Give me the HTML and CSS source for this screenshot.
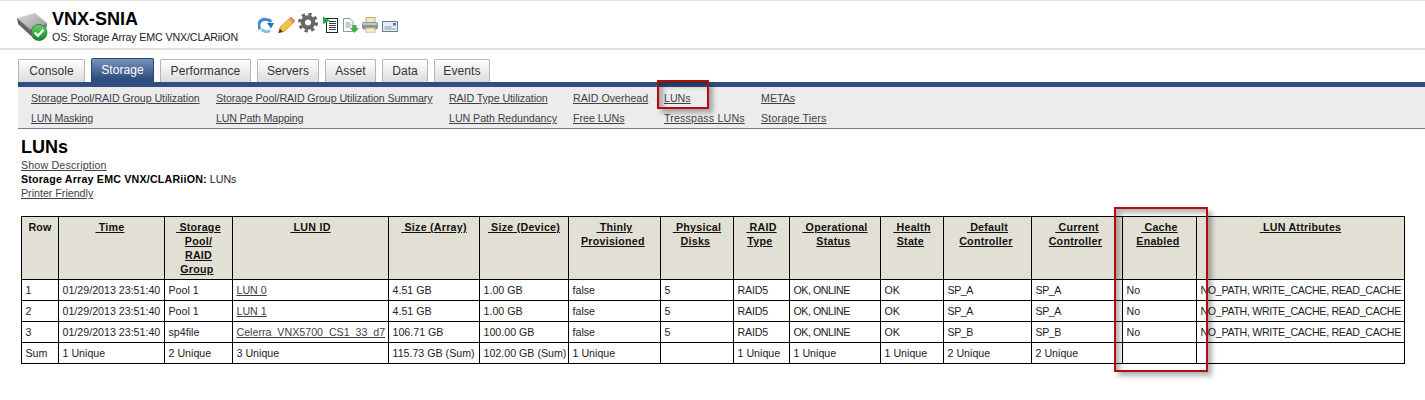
FILE: index.html
```html
<!DOCTYPE html>
<html lang="en">
<head>
<meta charset="utf-8">
<title>VNX-SNIA LUNs</title>
<link rel="stylesheet" href="styles.css">
</head>
<body>
<header class="top">
  <svg class="device" width="32" height="30" viewBox="0 0 32 30">
    <defs>
      <linearGradient id="dk" x1="0" y1="0" x2="1" y2="1"><stop offset="0" stop-color="#dadada"/><stop offset="1" stop-color="#9a9a9a"/></linearGradient>
      <linearGradient id="gr" x1="0" y1="0" x2="0" y2="1"><stop offset="0" stop-color="#6fd365"/><stop offset="1" stop-color="#0f8a22"/></linearGradient>
    </defs>
    <path d="M0 6 L18 1 L30 11 L14 18 Z" fill="url(#dk)"/>
    <path d="M0 6 L14 18 L14 24 L1 12 Z" fill="#666"/>
    <path d="M14 18 L30 11 L30 15 L14 24 Z" fill="#858585"/>
    <circle cx="22" cy="20.500" r="8" fill="url(#gr)" stroke="#0c6a1b" stroke-width=".7"/>
    <path d="M17.800 20.500 L21 23.800 L26.400 17.700" fill="none" stroke="#fff" stroke-width="2.400"/>
  </svg>
  <div class="ident">
    <h1 class="name">VNX-SNIA</h1>
    <p class="os">OS: Storage Array EMC VNX/CLARiiON</p>
  </div>
  <div class="tools">
    <svg width="20" height="20" viewBox="0 0 20 20"><path d="M2 16 A6 6 0 0 1 8 6.500 A6 6 0 0 1 13 9" fill="none" stroke="#3d8ed6" stroke-width="3.200"/><path d="M3.500 16 A6 6 0 0 0 12 17.500" fill="none" stroke="#86bfec" stroke-width="3"/><path d="M9 10 L16 10 L13 15.500 Z" fill="#2a70b8"/></svg>
    <svg width="20" height="20" viewBox="0 0 20 20"><path d="M0.500 20 L2 14.500 L13 4 L17 8 L6 18.500 Z" fill="#f6c445" stroke="#c98c1d" stroke-width=".8"/><path d="M13 4 L17 8 L15 10 L11 6 Z" fill="#e8867a"/><path d="M0.500 20 L2 15.800 L4.800 18.500 Z" fill="#3f3728"/></svg>
    <svg width="25" height="20" viewBox="0 0 25 20"><circle cx="10" cy="9.500" r="8.500" fill="none" stroke="#666" stroke-width="3" stroke-dasharray="3.340 3.340"/><circle cx="10" cy="9.500" r="7.300" fill="#666"/><circle cx="10" cy="9.500" r="3" fill="#fff"/></svg>
    <svg width="20" height="20" viewBox="0 0 20 20"><rect x="3.500" y="5.500" width="11" height="14" fill="#fff" stroke="#222"/><path d="M6 8.500h7M6 10.500h7M6 12.500h7M6 14.500h7M6 16.500h7" stroke="#2f3f4f"/><path d="M0 3.500 L7 7.500 L0 11 Z" fill="#29a544"/></svg>
    <svg width="19" height="20" viewBox="0 0 19 20"><path d="M.500 5.500h6.500l3 3v10h-9.500Z" fill="#fff" stroke="#8c96a8"/><path d="M2.500 10h5M2.500 12h6M2.500 14h5" stroke="#8c96a8"/><path d="M9.500 12h4v3h2.500L11.500 20 7 15h2.500Z" fill="#3bb54a"/></svg>
    <svg width="20" height="20" viewBox="0 0 20 20"><rect x="4" y="4.500" width="9" height="5" fill="#f1e6b4" stroke="#b8ad7c"/><rect x="0" y="9" width="16" height="7.500" rx="2" fill="#8a939b"/><rect x="1" y="10" width="14" height="2" fill="#c2c9ce"/><rect x="4" y="15" width="9" height="5" fill="#f5ecc4" stroke="#c9bd88"/></svg>
    <svg width="16" height="20" viewBox="0 0 16 20"><rect x=".500" y="8.500" width="15" height="10" fill="#e6ecf3" stroke="#6d7c8c"/><rect x="11" y="10" width="3" height="2.500" fill="#4a7ab8"/><path d="M2.500 14h7M2.500 16h11" stroke="#8b98a6"/></svg>
  </div>
</header>

<nav class="tabs">
  <a class="tab">Console</a>
  <a class="tab active">Storage</a>
  <a class="tab">Performance</a>
  <a class="tab">Servers</a>
  <a class="tab">Asset</a>
  <a class="tab">Data</a>
  <a class="tab">Events</a>
</nav>

<nav class="subnav">
  <a class="t1" href="#">Storage Pool/RAID Group Utilization</a>
  <a class="t1" href="#">Storage Pool/RAID Group Utilization Summary</a>
  <a class="t1" href="#">RAID Type Utilization</a>
  <a href="#">RAID Overhead</a>
  <a href="#">LUNs</a>
  <a href="#">METAs</a>
  <a class="t2" href="#">LUN Masking</a>
  <a class="t2" href="#">LUN Path Mapping</a>
  <a class="t3" href="#">LUN Path Redundancy</a>
  <a href="#">Free LUNs</a>
  <a class="w1" href="#">Tresspass LUNs</a>
  <a class="w1" href="#">Storage Tiers</a>
</nav>

<main class="content">
  <h2 class="title">LUNs</h2>
  <p class="line"><a class="w1" href="#">Show Description</a></p>
  <p class="line"><strong>Storage Array EMC VNX/CLARiiON:</strong> LUNs</p>
  <p class="line"><a href="#">Printer Friendly</a></p>

  <table class="grid">
    <colgroup>
      <col class="c1"><col class="c2"><col class="c3"><col class="c4"><col class="c5">
      <col class="c6"><col class="c7"><col class="c8"><col class="c9"><col class="c10">
      <col class="c11"><col class="c12"><col class="c13"><col class="c14"><col class="c15">
    </colgroup>
    <thead>
      <tr>
        <th>Row</th>
        <th><a href="#">&nbsp;Time</a>&nbsp;</th>
        <th><a href="#">&nbsp;Storage<br>Pool/<br>RAID<br>Group</a>&nbsp;</th>
        <th><a href="#">&nbsp;LUN ID</a></th>
        <th><a href="#">&nbsp;Size (Array)</a></th>
        <th><a href="#">&nbsp;Size (Device)</a></th>
        <th><a href="#">&nbsp;Thinly<br>Provisioned</a>&nbsp;</th>
        <th><a href="#">&nbsp;Physical<br>Disks</a>&nbsp;</th>
        <th><a href="#">&nbsp;RAID<br>Type</a>&nbsp;</th>
        <th><a href="#">&nbsp;Operational<br>Status</a>&nbsp;</th>
        <th><a href="#">&nbsp;Health<br>State</a>&nbsp;</th>
        <th><a href="#">&nbsp;Default<br>Controller</a>&nbsp;</th>
        <th><a href="#">&nbsp;Current<br>Controller</a>&nbsp;</th>
        <th><a href="#">&nbsp;Cache<br>Enabled</a>&nbsp;</th>
        <th><a href="#">&nbsp;LUN Attributes</a></th>
      </tr>
    </thead>
    <tbody>
      <tr><td>1</td><td>01/29/2013 23:51:40</td><td>Pool 1</td><td><a href="#">LUN 0</a></td><td>4.51 GB</td><td>1.00 GB</td><td>false</td><td>5</td><td class="k1">RAID5</td><td class="k2">OK, ONLINE</td><td>OK</td><td class="k2">SP_A</td><td class="k2">SP_A</td><td>No</td><td class="k3">NO_PATH, WRITE_CACHE, READ_CACHE</td></tr>
      <tr><td>2</td><td>01/29/2013 23:51:40</td><td>Pool 1</td><td><a href="#">LUN 1</a></td><td>4.51 GB</td><td>1.00 GB</td><td>false</td><td>5</td><td class="k1">RAID5</td><td class="k2">OK, ONLINE</td><td>OK</td><td class="k2">SP_A</td><td class="k2">SP_A</td><td>No</td><td class="k3">NO_PATH, WRITE_CACHE, READ_CACHE</td></tr>
      <tr><td>3</td><td>01/29/2013 23:51:40</td><td>sp4file</td><td><a href="#">Celerra_VNX5700_CS1_33_d7</a></td><td>106.71 GB</td><td>100.00 GB</td><td>false</td><td>5</td><td class="k1">RAID5</td><td class="k2">OK, ONLINE</td><td>OK</td><td class="k2">SP_B</td><td class="k2">SP_B</td><td>No</td><td class="k3">NO_PATH, WRITE_CACHE, READ_CACHE</td></tr>
      <tr><td>Sum</td><td>1 Unique</td><td>2 Unique</td><td>3 Unique</td><td>115.73 GB (Sum)</td><td>102.00 GB (Sum)</td><td>1 Unique</td><td></td><td>1 Unique</td><td>1 Unique</td><td>1 Unique</td><td>2 Unique</td><td>2 Unique</td><td></td><td></td></tr>
    </tbody>
  </table>
</main>

<div class="callout callout-luns"></div>
<div class="callout callout-cache"></div>
</body>
</html>
```
FILE: styles.css
```css
* { box-sizing: border-box; }
html, body { margin: 0; padding: 0; background: #fff; }
body {
  font-family: "Liberation Sans", Arial, sans-serif;
  font-size: 10.67px;
  color: #222;
  position: relative;
  height: 400px;
  overflow: hidden;
}
a { color: #404048; text-decoration: underline; }

.top {
  display: flex;
  align-items: flex-start;
  height: 50px;
  border-top: 1px solid #e2e2d8;
  border-bottom: 2px solid #e2e2d8;
  padding: 11px 0 0 17px;
}
.device { flex: none; }
.ident { margin-left: 3px; margin-top: -3px; width: 206px; }
.name { margin: 0; font-size: 18px; line-height: 21px; font-weight: bold; color: #000; }
.os { margin: 0; font-size: 10.67px; line-height: 14px; color: #222; letter-spacing: -.12px; }
.tools { display: flex; align-items: flex-start; margin-top: 1px; height: 20px; }
.tools svg { flex: none; }

.tabs {
  display: grid;
  grid-template-columns: 67px 63px 91px 62px 51px 46px 56px;
  column-gap: 6px;
  height: 32px;
  padding: 9px 0 0 18px;
}
.tab {
  display: block;
  height: 23px;
  text-align: center;
  font-size: 12px;
  line-height: 22px;
  letter-spacing: .1px;
  color: #333;
  text-decoration: none;
  background: linear-gradient(#fff, #dcdcdc);
  border: 1px solid #b4b4b4;
  border-bottom: 0;
  border-radius: 2px 2px 0 0;
}
.tab.active {
  height: 24px;
  margin-top: -1px;
  line-height: 23px;
  color: #fff;
  background: linear-gradient(#7893bb, #2f4f80 85%);
  border-color: #2a4674;
}

.subnav {
  display: grid;
  grid-template-columns: 169px 217px 108px 75px 81px auto;
  column-gap: 16px;
  grid-auto-rows: 20px;
  align-items: center;
  margin-left: 18px;
  height: 47px;
  padding: 1px 0 0 13px;
  background: #ececec;
  border-top: 5px solid #304f80;
  border-bottom: 1px solid #77808f;
}
.subnav a { white-space: nowrap; }
.t1 { letter-spacing: -.09px; }
.t2 { letter-spacing: -.18px; }
.t3 { letter-spacing: -.05px; }
.w1 { letter-spacing: .17px; }

.content { padding: 8px 0 0 21px; }
.title { margin: 0; font-size: 18px; line-height: 21px; font-weight: bold; color: #000; }
.line { margin: 0; line-height: 14px; }
.line strong { color: #000; letter-spacing: .2px; }

.grid {
  margin-top: 16px;
  width: 1384px;
  table-layout: fixed;
  border-collapse: collapse;
  border: 1px solid #000;
}
.grid th, .grid td { border: 1px solid #000; padding: 0 0 0 3.5px; }
.grid th {
  height: 63px;
  padding: 3px 1px 0 1px;
  vertical-align: top;
  text-align: center;
  font-weight: bold;
  line-height: 14px;
  letter-spacing: .25px;
  background: #e2e0d4;
  color: #111;
}
.grid th a { color: #111; }
.grid td { height: 21px; line-height: 14px; white-space: nowrap; overflow: visible; }
.grid .k1 { letter-spacing: -.2px; }
.grid .k2 { letter-spacing: -.45px; }
.grid .k3 { letter-spacing: -.33px; }
.c1 { width: 37px; }
.c2 { width: 106px; }
.c3 { width: 68px; }
.c4 { width: 156px; }
.c5 { width: 91px; }
.c6 { width: 89px; }
.c7 { width: 92px; }
.c8 { width: 73px; }
.c9 { width: 56px; }
.c10 { width: 91px; }
.c11 { width: 63px; }
.c12 { width: 88px; }
.c13 { width: 91px; }
.c14 { width: 74px; }
.c15 { width: 208px; }

.callout {
  position: absolute;
  border: 2px solid #b30c0c;
  box-shadow: 4px 4px 5px rgba(0, 0, 0, .3), inset 4px 4px 5px rgba(0, 0, 0, .3);
  pointer-events: none;
}
.callout-luns { left: 657px; top: 80px; width: 52px; height: 29px; }
.callout-cache { left: 1114px; top: 207px; width: 94px; height: 165px; }
```
